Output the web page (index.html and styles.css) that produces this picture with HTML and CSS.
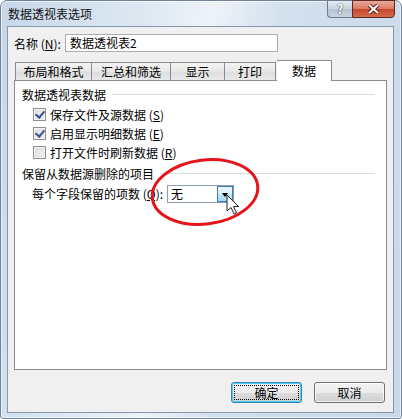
FILE: index.html
```html
<!DOCTYPE html>
<html lang="zh-CN">

<head>
    <meta charset="UTF-8">
    <title>数据透视表选项</title>
    <link rel="stylesheet" href="styles.css">
</head>

<body>
    <div class="window">
        <div class="titlebar">
            <span class="title">数据透视表选项</span>
            <div class="caption-btns">
                <span class="cap-help">?</span>
                <span class="cap-close">
                    <svg width="13" height="10" viewBox="0 0 13 10">
                        <path d="M2 1 L11 9 M11 1 L2 9" stroke="#5b1a10" stroke-width="4" />
                        <path d="M2 1 L11 9 M11 1 L2 9" stroke="#fff" stroke-width="2.2" />
                    </svg>
                </span>
            </div>
        </div>

        <div class="client">
            <!-- 名称 -->
            <div class="name-row">
                <label>名称 (<u>N</u>):</label>
                <div class="textbox">数据透视表2</div>
            </div>

            <!-- 选项卡 -->
            <ul class="tabs">
                <li style="width:76px">布局和格式</li>
                <li style="width:79px">汇总和筛选</li>
                <li style="width:54px">显示</li>
                <li style="width:52px">打印</li>
                <li class="active" style="width:55px">数据</li>
            </ul>

            <div class="panel">
                <div class="group-title"><span>数据透视表数据</span><i></i></div>
                <div class="check-row">
                    <span class="checkbox checked"></span>
                    <span>保存文件及源数据 (<u>S</u>)</span>
                </div>
                <div class="check-row">
                    <span class="checkbox checked"></span>
                    <span>启用显示明细数据 (<u>E</u>)</span>
                </div>
                <div class="check-row">
                    <span class="checkbox"></span>
                    <span>打开文件时刷新数据 (<u>R</u>)</span>
                </div>

                <div class="group-title second"><span>保留从数据源删除的项目</span><i></i></div>
                <div class="field-row">
                    <span>每个字段保留的项数 (<u>Q</u>):</span>
                    <div class="combo">
                        <span class="combo-text">无</span>
                        <span class="combo-btn"></span>
                    </div>
                </div>
            </div>

            <div class="buttons">
                <button class="btn default"><span>确定</span></button>
                <button class="btn">取消</button>
            </div>
        </div>

        <!-- 红圈和鼠标 -->
        <svg class="overlay" width="402" height="419" viewBox="0 0 402 419">
            <ellipse cx="205" cy="192" rx="53" ry="32" fill="none" stroke="#e4141a" stroke-width="3"
                transform="rotate(-7 205 192)" />
            <path d="M227 195 L227 211 L231 207.5 L234 214 L236.5 213 L233.5 206.5 L238.5 206.5 Z" fill="#fff"
                stroke="#222" stroke-width="1" stroke-linejoin="round" />
        </svg>
    </div>
</body>

</html>
```

FILE: styles.css
```css
* {
    margin: 0;
    padding: 0;
    box-sizing: border-box;
}

body {
    background: #fff;
    font-family: "Noto Sans CJK SC", "Liberation Sans", sans-serif;
    font-size: 12px;
    color: #000;
}

ul li {
    list-style: none;
}

u {
    text-decoration: underline;
}

.window {
    position: relative;
    width: 402px;
    height: 419px;
    border: 1px solid #6f8398;
    border-radius: 7px 7px 3px 3px;
    background: linear-gradient(100deg, #c7d7e8 0%, #dde8f2 30%, #eef3f8 45%, #d3e0ed 60%, #c9d8e8 100%);
    box-shadow: inset 0 0 0 1px rgba(255, 255, 255, 0.6);
    display: flex;
    flex-direction: column;
}

.titlebar {
    height: 25px;
    display: flex;
    align-items: center;
    padding-left: 7px;
    position: relative;
}

.title {
    line-height: 14px;
    color: #111;
}

.caption-btns {
    position: absolute;
    top: -1px;
    right: 6px;
    display: flex;
}

.cap-help {
    width: 25px;
    height: 18px;
    border: 1px solid #6b7c8e;
    border-right: none;
    border-radius: 0 0 0 4px;
    background: linear-gradient(#e4ebf2, #c9d4df 50%, #b5c3d1 51%, #c7d3df);
    color: #fff;
    font-weight: bold;
    font-size: 13px;
    line-height: 16px;
    text-align: center;
    text-shadow: 0 0 1px #333, 0 0 1px #333;
}

.cap-close {
    width: 43px;
    height: 18px;
    border: 1px solid #5d2a22;
    border-radius: 0 0 4px 0;
    background: linear-gradient(#eaa99a, #d97a62 50%, #c4472b 51%, #d66b4e);
    display: flex;
    align-items: center;
    justify-content: center;
}

.client {
    margin: 0 7px 0 6px;
    height: 387px;
    background: #f0f0f0;
    border: 1px solid #8497ac;
    padding: 7px 6px 0 6px;
    display: flex;
    flex-direction: column;
}

.name-row {
    display: flex;
    align-items: center;
    height: 18px;
}

.name-row label {
    width: 51px;
}

.textbox {
    width: 213px;
    height: 18px;
    border: 1px solid #abadb3;
    background: #fff;
    padding-left: 4px;
    line-height: 16px;
}

.tabs {
    display: flex;
    align-items: flex-end;
    height: 20px;
    margin-top: 8px;
    padding-left: 1px;
    position: relative;
    z-index: 1;
}

.tabs li {
    height: 18px;
    line-height: 17px;
    text-align: center;
    border: 1px solid #898c95;
    border-bottom: none;
    border-right: none;
    background: linear-gradient(#f4f4f4, #e6e6e6 50%, #dcdcdc 51%, #e9e9e9);
}

.tabs li:nth-child(4) {
    border-right: 1px solid #898c95;
}

.tabs li.active {
    height: 21px;
    margin-bottom: -1px;
    background: #fff;
    border-right: 1px solid #898c95;
    border-left: none;
    line-height: 20px;
    margin-left: 1px;
}

.panel {
    height: 290px;
    background: #fff;
    border: 1px solid #898c95;
    padding: 5px 7px 0 7px;
}

.group-title {
    height: 16px;
    display: flex;
    align-items: center;
}

.group-title span {
    white-space: nowrap;
}

.group-title i {
    flex: 1;
    height: 1px;
    margin: 1px 4px 0 6px;
    background: #d5dfe5;
}

.group-title.second {
    margin-top: 3px;
}

.check-row {
    height: 19px;
    display: flex;
    align-items: center;
    padding-left: 11px;
}

.group-title + .check-row {
    margin-top: 3px;
}

.checkbox {
    width: 13px;
    height: 13px;
    border: 1px solid #8f8f8f;
    background: linear-gradient(135deg, #dcdcdc, #f6f6f6);
    box-shadow: inset 0 0 0 1px #f4f4f4, inset 0 0 0 2px #e2e2e2;
    margin-right: 4px;
    position: relative;
}

.checkbox.checked::after {
    content: "";
    position: absolute;
    left: 3px;
    top: 0px;
    width: 4px;
    height: 7px;
    border-right: 2px solid #3d5291;
    border-bottom: 2px solid #3d5291;
    transform: rotate(40deg);
}

.field-row {
    margin-top: 3px;
    height: 19px;
    display: flex;
    align-items: center;
    padding-left: 10px;
    gap: 4px;
}

.combo {
    width: 67px;
    height: 18px;
    border: 1px solid #8e9eb1;
    background: #fff;
    display: flex;
}

.combo-text {
    flex: 1;
    padding-left: 3px;
    line-height: 16px;
}

.combo-btn {
    width: 16px;
    border: 1px solid #3c7fb1;
    background: linear-gradient(#eaf6fd, #d9f0fc 50%, #bee6fd 51%, #a7d9f5);
    position: relative;
}

.combo-btn::after {
    content: "";
    position: absolute;
    left: 4px;
    top: 6px;
    border-left: 3.5px solid transparent;
    border-right: 3.5px solid transparent;
    border-top: 4px solid #000;
}

.buttons {
    display: flex;
    justify-content: flex-end;
    gap: 12px;
    margin-top: 12px;
    padding-right: 2px;
}

.btn {
    width: 71px;
    height: 21px;
    border: 1px solid #707070;
    border-radius: 3px;
    background: linear-gradient(#f2f2f2, #ebebeb 50%, #dddddd 51%, #cfcfcf);
    font-family: "Noto Sans CJK SC", "Liberation Sans", sans-serif;
    font-size: 12px;
    color: #000;
    box-shadow: inset 0 0 0 1px rgba(255, 255, 255, 0.7);
}

.btn.default {
    border-color: #3c7fb1;
    box-shadow: inset 0 0 0 1px #48d0f8;
    padding: 2px;
}

.btn.default span {
    display: block;
    height: 15px;
    line-height: 13px;
    border: 1px dotted #000;
}

.overlay {
    position: absolute;
    left: -1px;
    top: -1px;
    pointer-events: none;
}
```
